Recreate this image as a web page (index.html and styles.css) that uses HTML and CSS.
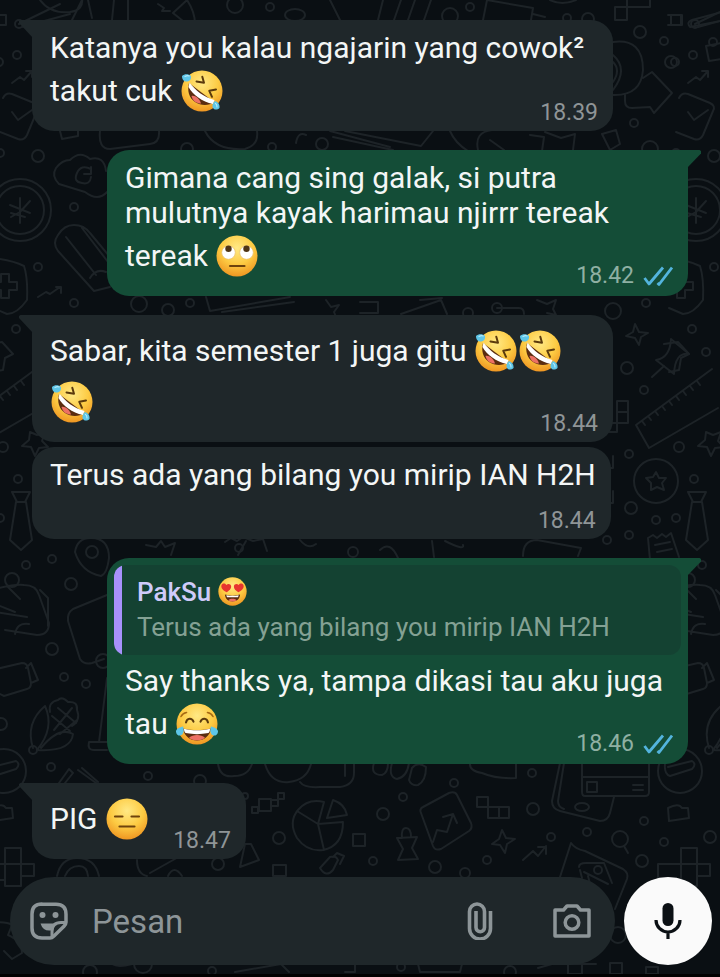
FILE: index.html
```html
<!DOCTYPE html>
<html lang="id">
<head>
  <meta charset="UTF-8" />
  <meta name="viewport" content="width=device-width, initial-scale=1.0"/>
  <title>PakSu</title>
  <link rel="stylesheet" href="styles.css">
</head>
<body>

  <!-- shared emoji and icons -->
  <svg class="sprite" aria-hidden="true">
    <defs>
      <radialGradient id="face" cx="0.5" cy="0.3" r="0.72">
        <stop offset="0" stop-color="#ffe985"/>
        <stop offset="0.55" stop-color="#fdcb43"/>
        <stop offset="1" stop-color="#ee9320"/>
      </radialGradient>

      <symbol id="rofl" viewBox="0 0 42 42">
        <circle cx="21" cy="21" r="20.5" fill="url(#face)"/>
        <path d="M15.500 11.500l7.500 1.200-1.700-6M35 19.500l-6.700 1.300 2.700 6" fill="none" stroke="#5b3a0c" stroke-width="2" stroke-linecap="round" stroke-linejoin="round"/>
        <path d="M8 13C6 21 8 28 14 32C20 36 28 36 33 32z" fill="#5a2c10"/>
        <path d="M10.500 26c3-1 8 2 9.500 7.500c-2 0-4-.6-6-1.800c-2-1.500-3-3.500-3.500-5.700z" fill="#ec7064"/>
        <path d="M8.500 12.500C14 20 23 27.500 33.500 30l-1.500 4C21 31.500 12 25 7.500 17z" fill="#fff"/>
        <path d="M1 6c2.500-2.500 7-2 9 0c.5 3-1 5-3.500 5.500C3 12 1 9.500 1 6z" fill="#5ec6e8"/>
        <path d="M34 31c3 1 5 3.500 4.500 7c-2.500 2.500-6 2-7-1c-.5-2.500 1-4.500 2.500-6z" fill="#5ec6e8"/>
        <path d="M4 6.500c2-1 3-1 4-.5M36 37c0-2-.5-3-1.500-3.500" fill="none" stroke="#b5eafa" stroke-width="1.200" stroke-linecap="round"/>
      </symbol>

      <symbol id="eyeroll" viewBox="0 0 42 42">
        <circle cx="21" cy="21" r="20.5" fill="url(#face)"/>
        <circle cx="12.500" cy="17.500" r="6.800" fill="#fff" stroke="#e8bd68" stroke-width=".7"/>
        <circle cx="30.500" cy="17.500" r="6.800" fill="#fff" stroke="#e8bd68" stroke-width=".7"/>
        <circle cx="12.500" cy="13.800" r="3.200" fill="#4f3415"/>
        <circle cx="30.500" cy="13.800" r="3.200" fill="#4f3415"/>
        <path d="M14 31h14.500" stroke="#6e430c" stroke-width="2.200" stroke-linecap="round"/>
      </symbol>

      <symbol id="joy" viewBox="0 0 42 42">
        <circle cx="21" cy="21" r="20.5" fill="url(#face)"/>
        <path d="M5 13.500c1-2 3-3.500 5.500-4M37 13.500c-1-2-3-3.500-5.500-4" fill="none" stroke="#a66a14" stroke-width="1.600" stroke-linecap="round"/>
        <path d="M10 19.500c1-5 6-5 7.500-.8M24.500 18.700c1.500-4.200 6.500-4.200 7.500.8" fill="none" stroke="#5b3a0c" stroke-width="2" stroke-linecap="round"/>
        <path d="M7 25.500c9 2 19 2 28 0C34 33 28 37.500 21 37.500S8 33 7 25.500z" fill="#5a2c10"/>
        <path d="M13 34.700c4-3.500 12-3.500 16 0c-4 3.500-12 3.500-16 0z" fill="#ec7064"/>
        <path d="M8 25.700c9 2 17 2 26 0c0 2-.5 3.500-1.500 4.300c-8 1.500-15 1.500-23 0C8.500 29.200 8 27.700 8 25.700z" fill="#fff"/>
        <path d="M7 23.500c1.500 4 .5 8.500-3 9C1 33 0 30 0 28c1-3 4-3.500 7-4.500zM35 23.500c-1.500 4-.5 8.500 3 9c3 .5 4-2.500 4-4.500c-1-3-4-3.500-7-4.500z" fill="#5ec6e8"/>
      </symbol>

      <symbol id="hearteyes" viewBox="0 0 42 42">
        <circle cx="21" cy="21" r="20.5" fill="url(#face)"/>
        <path d="M12.500 22C7 19.500 4 16 5 12c1-3 5-3.500 7-.5c2.500-2.500 6.500-1.500 7 1.500c.5 4-3 7-6.500 9z" fill="#e8352f"/>
        <path d="M29.500 22C35 19.500 38 16 37 12c-1-3-5-3.500-7-.5c-2.500-2.500-6.500-1.500-7 1.500c-.5 4 3 7 6.500 9z" fill="#e8352f"/>
        <path d="M10 25.500c7 2 15 2 22 0c-.5 6.500-5 10-11 10s-10.500-3.500-11-10z" fill="#5a2c10"/>
        <path d="M12 26.300c6 1.300 12 1.300 18 0l-1 3H13z" fill="#fff"/>
        <path d="M15 33.500c3-2.500 9-2.500 12 0c-3 2.500-9 2.500-12 0z" fill="#ec7064"/>
      </symbol>

      <symbol id="expressionless" viewBox="0 0 42 42">
        <circle cx="21" cy="21" r="20.5" fill="url(#face)"/>
        <path d="M9 18.500h7.500M25.500 18.500H33M13.500 28.500h15" stroke="#6e430c" stroke-width="2.200" stroke-linecap="round"/>
      </symbol>

      <symbol id="ticks" viewBox="0 0 30 20">
        <path d="M1.500 12l4.500 6L20 1.500M14.500 17l1.500 1.500L29 1.500" fill="none" stroke="#53b4dd" stroke-width="2.800" stroke-linejoin="round"/>
      </symbol>
    </defs>
  </svg>

  <!-- wallpaper -->
  <svg class="wallpaper" aria-hidden="true">
    <defs>
      <g id="edge">
        <circle cx="20" cy="210" r="31"/><circle cx="20" cy="210" r="24"/>
        <path d="M20 198v25M10 205l20 8M30 201l-10 11l-9 5M11 213l14 4"/>
        <path d="M-8 15H6v10H-8M19 24L60 4M22 27L70 14"/><circle cx="19" cy="24" r="4"/>
        <circle cx="17" cy="55" r="4"/><circle cx="-1" cy="62" r="4"/>
        <path d="M12 83l8-6 4 3 8-9M26 71h6v6"/>
        <path d="M3 98q3-6 9-4l22 9q6 3 3 8l-10 24q-3 6-9 4l-18-7M12 112l6 8 14-10"/>
        <circle cx="38" cy="156" r="6"/><circle cx="0" cy="153" r="4"/>
        <path d="M-8 258q20 2 32 8q4 12 3 34q-10 14-20 14l-14-6M1 274h8v8h8v8H9v8H1v-8h-8v-8h8z"/>
        <circle cx="38" cy="267" r="4"/><circle cx="16" cy="329" r="4"/>
        <path d="M-12 344l14-2 11 12-8 4-2 12-10 2M-27 448L42 408M-40 425L36 369M-27 448l-13-23M-34 421l3 4M-28 416l3 4M-21 411l3 4M-14 406l3 4M-7 401l3 4M0 396l3 4M7 391l3 4M14 386l3 4M21 381l3 4"/>
        <path d="M30 432l7 3 8-3-3 9 6 6-9 1-4 8-4-9-9-1 7-6z"/><circle cx="3" cy="447" r="5"/>
        <path d="M12 492h18l-5 10h-8zM16 502h10l6 38-11 10-11-10z"/><circle cx="18" cy="479" r="4"/><circle cx="0" cy="518" r="4"/>
        <circle cx="12" cy="580" r="7"/><path d="M8 587l12 12M-8 590q20-6 32-5q12 0 15 10l10 28q0 12-12 12l-32-5M-5 604l20 8M-5 612l32 5M15 634q2-12 14-10M40 590l8 8v28"/>
        <circle cx="26" cy="565" r="4"/><circle cx="52" cy="559" r="4"/>
        <path d="M-8 670l30-7q5 0 6 5l3 15q0 5-4 6L4 696l-12-6M26 668l5-5 7 17-7 3"/>
        <circle cx="1" cy="724" r="6"/><circle cx="64" cy="677" r="4"/>
        <path d="M33 748q-8-25 12-42q10 22-8 44q34 2 36-16q-14-8-32 14M50 712q-2-10 8-12q4-4 10 2q10-1 9 8q4 10-5 16M52 716l18 15M58 708l18 15M54 730l18-22M60 734l17-14"/><circle cx="33" cy="750" r="4"/>
        <circle cx="4" cy="771" r="22"/><path d="M-8 767l24-6q5 3 0 8L-6 776q-6-2-5-12l-2-8"/><circle cx="51" cy="767" r="4"/>
        <path d="M-8 808q8-4 12-2l2 2h6l1 10-20 3z"/>
        <path d="M5 848h16v16H5zM21 864h13v12H21zM5 864h16v22H5zM-18 864H5v16h-23zM-10 923q16-2 22 2l-4 10q14 6 14 18l-10 6-8-8"/>
      </g>
    </defs>
    <g class="doodles">
      <use href="#edge"/>
      <use href="#edge" x="676"/>

      <path d="M40 0q10 14 30 12q14-2 12-14M72 20L82 0M92 18L88 0M128 0v20M114 0l-2 20M158 4l6 4-2 3 8 0M173 13L187 0q8 12 8 24M173 13l10 8"/>
      <circle cx="235" cy="5" r="8"/><circle cx="270" cy="7" r="4"/><ellipse cx="295" cy="15" rx="10" ry="6"/>
      <path d="M330 0l10 20M378 20l5-20M394 20l7-20M408 20l7-20M424 20l7-20M483 20l4-20 46 8-2 12M533 14l12 3"/>
      <circle cx="450" cy="16" r="8"/><circle cx="470" cy="7" r="4"/><circle cx="588" cy="19" r="6"/><circle cx="567" cy="18" r="4"/>
      <path d="M550 0q12 6 26 0M615 7h12v13h-12zM627-4h23v11h-23zM671 15h10v10h-10zM740 7l-48 13q-6 2-2 7l40-8"/>
      <circle cx="640" cy="32" r="6"/><circle cx="664" cy="41" r="4"/><circle cx="671" cy="62" r="6"/>
      <path d="M613 42q30-4 30 28q-2 26-30 25M613 55q16 14 0 35M613 62q8 8 0 20M643 78l9-6 20 21-18 20-4-6-18 1q-7 0-7-7V95"/>
      <path d="M706 46l15-3M706 46l3 15 12-2"/><circle cx="713" cy="42" r="4"/><circle cx="634" cy="123" r="4"/>

      <path d="M60 131l2 8 16-3v-6M100 131q-2 18 10 18l40-5q10-1 9-13M205 131q10 20 40 18q14-4 12-18M296 143q2-12 10-8M330 131l60 16M345 131l76 15 12-15M333 137l60 13M450 131q5 12 18 20M478 150q-4-18 14-20M490 140l14 10M530 135l14 2-2 14M545 132l16 6 14-4-2 16M602 134l14-4 4 14-10 6z"/>
      <circle cx="187" cy="149" r="6"/><circle cx="322" cy="144" r="6"/><circle cx="272" cy="147" r="4"/><circle cx="650" cy="149" r="8"/>
      <path d="M107 192q-9 10-22 0l-26-8q-8-8-3-16q6-8 14-8q10-10 20-1q14-4 16 12M91 169q-10-5-14 4t5 10q8 2 9-6M91 167v7h-7"/>
      <circle cx="74" cy="207" r="4"/>
      <path d="M58 235q6-10 16-10q10 0 16 8l20 24M58 235q-6 8 0 16l36 40 16-4M66 237l30 38M82 228l26 34M90 278q6-10 16-6M38 297l8-5 4 2 10-7M56 287h5v6"/>

      <circle cx="74" cy="303" r="4"/><circle cx="139" cy="304" r="8"/><circle cx="168" cy="310" r="6"/><circle cx="190" cy="303" r="4"/>
      <path d="M206 297l4 14 80-14M222 312l72-10M326 300l5 7 8-2-5 7 2 5M401 314l40-14 6 14M360 302h18v11h-18M420 300l22-2M497 308h22q5 0 5 6"/>
      <circle cx="497" cy="308" r="5"/><circle cx="468" cy="313" r="5"/><path d="M537 300l10 4 9-4-3 9 3 6-9-2"/>
      <circle cx="613" cy="311" r="8"/><circle cx="646" cy="303" r="4"/>
      <path d="M635 324l4 8 9 1-7 4-2 8-4-7-9-2 7-4z"/><circle cx="627" cy="368" r="6"/><circle cx="644" cy="390" r="4"/><circle cx="706" cy="352" r="4"/>
      <path d="M671 339l18 15q-14-2-15 20l-18-14q14-2 15-21zM664 366l-12 11"/>
      <path d="M617 401h11v11h-11zM617 412h11v11h-11zM608 423h9v9h-9M613 456v12h-6M613 491v12h-6"/>
      <circle cx="629" cy="454" r="4"/><circle cx="656" cy="481" r="22"/>
      <path d="M656 472l3 6 7 0-4 5 2 7-7-3-6 3 0-7-5-5 7-1z"/>
      <circle cx="631" cy="508" r="6"/><circle cx="656" cy="520" r="4"/><circle cx="629" cy="535" r="4"/><circle cx="607" cy="540" r="4"/>

      <path d="M75 552q2-14 16-14q18 0 18 20q-2 16-8 18q-20-4-26-24z"/><circle cx="92" cy="552" r="6"/>
      <path d="M146 545l10 2 5-6 4 6 10-4-4 12M225 542l6-4 6 3 6-4 10 4 10-2 4 12M300 540q8 10 16 4M246 541l-8 14M380 550q10-10 18 8M432 541l2 16M445 541q20 10 18 4M523 556q0-16 14-16l44 8-3 8M650 560l-2-22 5-3 4 3 5-4 4 3 5-4 8 24M655 545l15-3M657 552l15-3"/>
      <circle cx="239" cy="548" r="4"/><circle cx="353" cy="552" r="5"/>
      <circle cx="71" cy="584" r="6"/><circle cx="52" cy="649" r="6"/><circle cx="86" cy="684" r="4"/>
      <path d="M107 595l-34 14q-6 4-5 12l12 38q4 6 12 4l12-4M107 678l-8 64M107 742l-18 0q-2 8 5 8h13"/><circle cx="103" cy="661" r="7"/>

      <path d="M59 783l10-14 4 4-8 10M78 770l18 13M82 768l16 14M218 764q2 14 16 12q14 0 18-12M265 764q6 20 24 18q18-2 22-18M300 782q4 6 20 5h20q14-2 14-14v-10M345 764v12"/>
      <circle cx="148" cy="776" r="4"/><circle cx="200" cy="781" r="6"/><circle cx="245" cy="796" r="3"/>
      <path d="M252 813h6v-6h-6zM259 799h12v12h-12zM271 800h7v6h-7zM278 793h6v6h-6z"/>
      <circle cx="279" cy="838" r="6"/><path d="M318 824l6-22q-16-4-26 8t-1 28q10 14 26 12q20-4 20-28zM318 824l-21-13M318 824l6 26M327 818l6-18q12 4 14 15z"/>
      <path d="M245 844l6 0 8 16-19 7zM320 868l10-11q6-2 8 3l-5 10q-7 8-13-2zM333 857l4-4 7 3-4 8M273 865h13v11h-13zM353 834h12v12h-12z"/><circle cx="218" cy="864" r="6"/>
      <path d="M57 876q4-18 20-18q18 0 22 18M65 876q4-10 14-10q8 0 9 10M137 860q0 14 10 16M150 873l32-18M168 876q6-12 14 0"/>
      <path d="M374 763q-4 12 8 12q6-2 6-12M392 763q-4 14 5 16q10-2 12-16M412 768l-3 12q2 6 9 5q8-4 8-18q-8-6-14 1M470 763q-1 8 12 10q14 6 34 5v-15M560 763l-8 38q0 8 8 10l40 10q8 0 10-8l4-16M564 763l-6 38q0 6 6 8"/>
      <path d="M582 763h67v29q0 4-4 4h-60q-3 0-3-4zM582 777h67M587 782h10v10h-10zM633 785h10M633 790h10"/><ellipse cx="582" cy="807" rx="7" ry="4"/>
      <circle cx="532" cy="773" r="4"/><circle cx="454" cy="783" r="4"/><circle cx="403" cy="797" r="4"/><circle cx="383" cy="814" r="6"/><circle cx="533" cy="809" r="6"/>
      <path d="M421 813q-2-4 2-6l26-14q6-2 8 2l14 28q2 5-2 8l-28 18q-6 2-8-3zM433 842l4-12 10 2 6-18M443 817l10-3 4 9M477 797h11v10h-11zM488 807h11v11h-11zM499 807h10v11h-10z"/>
      <path d="M397 838l20-1-5 11 6 11-20 1 5-11zM402 838q-1-10 4-10t5 9"/>
      <path d="M502 830l4 8 9 1-8 5-2 9-5-8-8-1 7-5zM523 860l10-9 5 5 8-10M538 847h8v7"/>
      <circle cx="487" cy="860" r="4"/><circle cx="435" cy="867" r="6"/><circle cx="551" cy="837" r="4"/><circle cx="587" cy="832" r="4"/><circle cx="644" cy="821" r="4"/><circle cx="710" cy="837" r="6"/><circle cx="664" cy="842" r="4"/><circle cx="642" cy="861" r="6"/><circle cx="373" cy="861" r="4"/><circle cx="465" cy="873" r="5"/>
      <circle cx="620" cy="839" r="8"/><path d="M624 846l4 7M560 877l11-34q4 6 14 8l38 18q6 4 4 10l-12 30M579 867q0-4 7-4l18 0 8 20M584 872l24 12M580 870l2 8M588 876l2 8"/><circle cx="598" cy="870" r="4"/>
      <circle cx="618" cy="935" r="8"/>
      <path d="M112 964q6 4 20 0M418 964l2 8h40l2-8M235 972l46-8 8 8M568 964h14v10h-14zM582 964h14M610 963h12v11h-12zM646 967h12v7h-12zM345 964h10v8h-10M538 968l14-4"/><circle cx="143" cy="964" r="9"/><circle cx="90" cy="972" r="7"/><circle cx="212" cy="971" r="4"/><circle cx="401" cy="967" r="4"/><circle cx="510" cy="972" r="6"/>
    </g>
  </svg>

  <main class="chat">
    <div class="message in tail">
      <p class="text">Katanya you kalau ngajarin yang cowok² takut cuk <svg class="emoji" role="img" aria-label="🤣"><use href="#rofl"/></svg></p>
      <time class="time">18.39</time>
    </div>

    <div class="message out tail group">
      <p class="text">Gimana cang sing galak, si putra mulutnya kayak harimau njirrr tereak tereak <svg class="emoji" role="img" aria-label="🙄"><use href="#eyeroll"/></svg></p>
      <div class="meta"><time class="time">18.42</time><svg class="ticks" role="img" aria-label="Dibaca"><use href="#ticks"/></svg></div>
    </div>

    <div class="message in tail group">
      <p class="text">Sabar, kita semester 1 juga gitu <svg class="emoji" role="img" aria-label="🤣"><use href="#rofl"/></svg><svg class="emoji" role="img" aria-label="🤣"><use href="#rofl"/></svg><svg class="emoji" role="img" aria-label="🤣"><use href="#rofl"/></svg></p>
      <time class="time">18.44</time>
    </div>

    <div class="message in time-below">
      <p class="text">Terus ada yang bilang you mirip IAN H2H</p>
      <time class="time">18.44</time>
    </div>

    <div class="message out tail group">
      <blockquote class="quote">
        <div class="quote-name">PakSu <svg class="emoji-small" role="img" aria-label="😍"><use href="#hearteyes"/></svg></div>
        <p class="quote-text">Terus ada yang bilang you mirip IAN H2H</p>
      </blockquote>
      <p class="text">Say thanks ya, tampa dikasi tau aku juga tau <svg class="emoji" role="img" aria-label="😂"><use href="#joy"/></svg></p>
      <div class="meta"><time class="time">18.46</time><svg class="ticks" role="img" aria-label="Dibaca"><use href="#ticks"/></svg></div>
    </div>

    <div class="message in tail group time-beside">
      <p class="text">PIG <svg class="emoji" role="img" aria-label="😑"><use href="#expressionless"/></svg></p>
      <time class="time">18.47</time>
    </div>
  </main>

  <form class="composer">
    <div class="field">
      <button type="button" class="icon-btn" aria-label="Stiker">
        <svg width="38" height="38" viewBox="0 0 38 38" fill="none" stroke="currentColor" stroke-width="3.500" stroke-linejoin="round">
          <path d="M12 2.200h14q10 0 10 10v8q0 2-2 4L24 34q-2 2-4 2h-8q-10 0-10-10V12q0-10 10-10z"/>
          <path d="M35.500 20.500H31q-9 0-9 9V35" stroke-width="3"/>
          <circle cx="12.500" cy="13" r="3" fill="currentColor" stroke="none"/>
          <circle cx="25.500" cy="13" r="3" fill="currentColor" stroke="none"/>
          <path d="M10.500 21.500h17q-6 2-6.500 7q-8 1-10.500-7z" fill="currentColor" stroke="none"/>
        </svg>
      </button>
      <input type="text" class="message-input" placeholder="Pesan" aria-label="Pesan" />
      <button type="button" class="icon-btn" aria-label="Lampirkan">
        <svg width="26" height="38" viewBox="0 0 26 38" fill="none" stroke="currentColor" stroke-width="3.600">
          <path d="M23.500 9v17.500a10.500 10.500 0 0 1-21 0V9.500a7.500 7.500 0 0 1 15 0v16a4.250 4.250 0 0 1-8.500 0V9"/>
        </svg>
      </button>
      <button type="button" class="icon-btn camera" aria-label="Kamera">
        <svg width="38" height="34" viewBox="0 0 38 34" fill="none" stroke="currentColor" stroke-width="3.500" stroke-linejoin="round">
          <path d="M2 6h8.500l3.500-4h10l3.500 4H36v26H2z"/>
          <circle cx="19" cy="18.500" r="6.800"/>
        </svg>
      </button>
    </div>
    <button type="button" class="mic" aria-label="Pesan suara">
      <svg width="28" height="36" viewBox="0 0 28 36" fill="none" stroke="currentColor" stroke-width="3.200">
        <rect x="8.500" y="0" width="11" height="23" rx="5.500" fill="currentColor" stroke="none"/>
        <path d="M2 17a12 12 0 0 0 24 0M14 28.500V36"/>
      </svg>
    </button>
  </form>

</body>
</html>
```

FILE: styles.css
```css
* {
  box-sizing: border-box;
}

body {
  font-family: Roboto, "Noto Sans", sans-serif;
  background-color: #0a0f13;
  color: #f3f6f6;
  display: flex;
  flex-direction: column;
  min-height: 100vh;
  margin: 0;
  border-bottom: 4px solid #000;
  position: relative;
  overflow-x: hidden;
}

p, blockquote {
  margin: 0;
}

.sprite {
  position: absolute;
  width: 0;
  height: 0;
}

.wallpaper {
  position: absolute;
  top: 0;
  left: 0;
  width: 100%;
  height: 100%;
  z-index: -1;
}

.doodles {
  fill: none;
  stroke: #1d2327;
  stroke-width: 2;
  stroke-linejoin: round;
  stroke-linecap: round;
}

/* messages */
.chat {
  flex: 1;
  display: flex;
  flex-direction: column;
  align-items: flex-start;
  padding: 20px 32px 18px;
}

.message {
  position: relative;
  display: grid;
  max-width: calc(100% - 75px);
  margin-top: 5px;
  padding: 7px;
  border-radius: 22px;
}

.message:first-child {
  margin-top: 0;
}

.message.group {
  margin-top: 19px;
}

.in {
  background-color: #1f272a;
}

.out {
  background-color: #144d37;
  align-self: flex-end;
}

.in.tail {
  border-top-left-radius: 0;
}

.out.tail {
  border-top-right-radius: 0;
}

.tail::before {
  content: "";
  position: absolute;
  top: 0;
  width: 14px;
  height: 18px;
  background-color: inherit;
}

.in.tail::before {
  right: 100%;
  margin-right: -1px;
  clip-path: polygon(10% 0, 100% 0, 100% 100%, 0 16%, 0 6%);
}

.out.tail::before {
  left: 100%;
  margin-left: -1px;
  clip-path: polygon(90% 0, 0 0, 0 100%, 100% 20%, 100% 6%);
}

.text {
  padding: 3px 8px 8px 11px;
  font-size: 30px;
  line-height: 35px;
}

.emoji {
  width: 42px;
  height: 42px;
  margin: 5px 1px 4px;
  vertical-align: -15px;
}

.time {
  font-size: 23px;
  line-height: 26px;
  color: #8f9597;
}

/* the time shares the last row with the text */
.message > .time,
.meta {
  grid-column: 1;
  align-self: end;
  justify-self: end;
  margin-right: 8px;
}

.message > .time {
  margin-bottom: -2px;
}

.message > .text {
  grid-column: 1;
}

.text + .time,
.text + .meta {
  margin-top: -26px;
}

.time-below .text + .time {
  margin-top: 8px;
}

.time-beside .text {
  padding-right: 90px;
}

.meta {
  display: flex;
  align-items: center;
  gap: 9px;
}

.out .time {
  color: #8fb0a3;
}

.ticks {
  width: 30px;
  height: 20px;
}

/* quoted message */
.quote {
  padding: 10px 15px 10px 23px;
  border-radius: 12px;
  background: linear-gradient(to right, #a791fb 8px, #144232 8px);
}

.quote-name {
  font-size: 26px;
  font-weight: 500;
  line-height: 35px;
  color: #cfcbfa;
}

.quote-text {
  font-size: 26px;
  line-height: 35px;
  color: #84a194;
}

.emoji-small {
  width: 29px;
  height: 29px;
  vertical-align: -5px;
}

.quote + .text {
  padding-top: 8px;
}

/* composer */
.composer {
  display: flex;
  gap: 9px;
  padding: 0 8px 9px 10px;
}

.field {
  flex: 1;
  min-width: 0;
  height: 88px;
  display: flex;
  align-items: center;
  padding: 0 24px 0 20px;
  border-radius: 44px;
  background-color: #1f272a;
}

.icon-btn, .mic {
  display: flex;
  align-items: center;
  justify-content: center;
  padding: 0;
  border: none;
  background: none;
  color: #8d9598;
  cursor: pointer;
}

.message-input {
  flex: 1;
  min-width: 0;
  padding: 0 24px;
  border: none;
  outline: none;
  background: none;
  font-family: inherit;
  font-size: 33px;
  color: #f3f6f6;
}

.message-input::placeholder {
  color: #8d9598;
  opacity: 1;
}

.camera {
  margin-left: 60px;
}

.mic {
  width: 88px;
  height: 88px;
  border-radius: 50%;
  background-color: #fafafa;
  color: #0b1014;
}
```
